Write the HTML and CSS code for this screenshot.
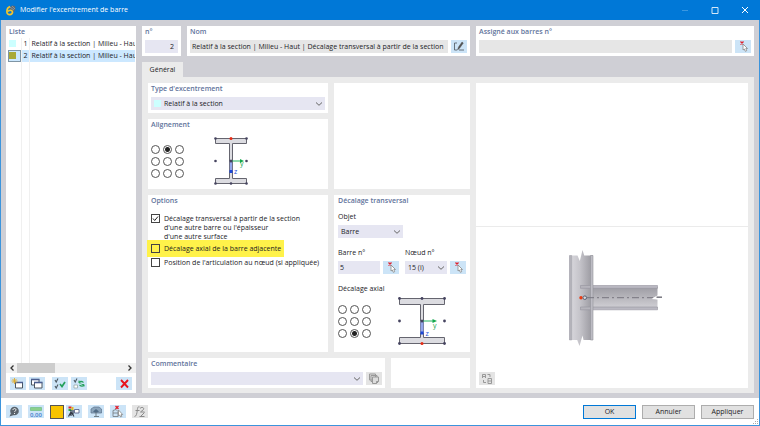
FILE: index.html
```html
<!DOCTYPE html>
<html lang="fr">
<head>
<meta charset="utf-8">
<title>Modifier l'excentrement de barre</title>
<link rel="stylesheet" href="styles.css">
</head>
<body>
<svg class="defs" width="0" height="0" aria-hidden="true">
  <defs>
    <symbol id="chevron" viewBox="0 0 8 6"><path d="M1 1.500L4 4.300L7 1.500" fill="none" stroke="#666" stroke-width="1"/></symbol>
    <symbol id="pick" viewBox="0 0 16 14">
      <path d="M5.500 1.500l3 3M8.500 1.500l-3 3" stroke="#e0202c" stroke-width="1.300"/>
      <path d="M8 4v6l1.300-1 1 2.300 1.400-.6-.9-2.200h1.700z" fill="#fff" stroke="#888" stroke-width=".8"/>
    </symbol>
  </defs>
</svg>
<div class="window">
  <header class="titlebar">
    <svg class="app-icon" width="10" height="11" viewBox="0 0 10 11"><path d="M3 3l3-2.500 3 .5.500 3-2 4z" fill="#5d6873"/><path d="M4 2l4 3M6 1l3 3" stroke="#a5a8a5" stroke-width=".7"/><path d="M4 1.500C1.500 2.500.700 5 1 7.500c.3 2.700 5.300 2.900 5.500-.2C6.600 5 3.500 4.500 2 6.500" fill="none" stroke="#f3c52c" stroke-width="1.700"/></svg>
    <h1>Modifier l'excentrement de barre</h1>
    <button class="caption" aria-label="Réduire"><svg width="8" height="8" viewBox="0 0 8 8"><path d="M1 4.500h6" stroke="#3b97e0"/></svg></button>
    <button class="caption" aria-label="Agrandir"><svg width="8" height="8" viewBox="0 0 8 8"><path d="M1 1.500h6v6H1z" fill="none" stroke="#d5e8f8"/></svg></button>
    <button class="caption" aria-label="Fermer"><svg width="8" height="8" viewBox="0 0 8 8"><path d="M1 1l6 6M7 1L1 7" stroke="#fff"/></svg></button>
  </header>

  <div class="content">
    <aside class="card list">
      <h2>Liste</h2>
      <div class="list-area">
        <table>
          <tr><td class="c-color"><i class="swatch cyan"></i></td><td class="c-num">1</td><td class="c-name">Relatif à la section | Milieu - Haut | Décalage</td></tr>
          <tr class="selected"><td class="c-color"><i class="swatch olive"></i></td><td class="c-num">2</td><td class="c-name">Relatif à la section | Milieu - Haut | Décalage</td></tr>
          <tr class="rest"><td></td><td></td><td></td></tr>
        </table>
      </div>
      <div class="scroll">
        <svg width="10" height="10" viewBox="0 0 10 10"><path d="M6.500 2.500L4 5l2.500 2.500" fill="none" stroke="#333" stroke-width="1.300"/></svg>
        <div class="track"><div class="thumb"></div></div>
        <svg width="10" height="10" viewBox="0 0 10 10"><path d="M3.500 2.500L6 5 3.500 7.500" fill="none" stroke="#333" stroke-width="1.300"/></svg>
      </div>
      <div class="list-tools">
        <button class="icon" aria-label="Nouveau"><svg width="16" height="14" viewBox="0 0 16 14"><path d="M5.500 5.500h7v5.500h-7z" fill="#fff" stroke="#4b5560"/><path d="M5 5.500h8" stroke="#4c5f91" stroke-width="1.500"/><path d="M4.500 1v6M1.500 4h6M2.400 1.900l4.200 4.200M6.600 1.900L2.400 6.100" stroke="#dfad2c" stroke-width=".9"/></svg></button>
        <button class="icon" aria-label="Copier"><svg width="16" height="14" viewBox="0 0 16 14"><path d="M2.500 2.500h7.500V8H2.500z" fill="#fff" stroke="#4b5560"/><path d="M2 2.500h8.500" stroke="#4c5f91" stroke-width="1.600"/><path d="M5.500 5.500h7.500V11H5.500z" fill="#fff" stroke="#4b5560"/><path d="M5 5.500h8.500" stroke="#4c5f91" stroke-width="1.600"/></svg></button>
        <span class="gap"></span>
        <button class="icon" aria-label="Tout sélectionner"><svg width="16" height="14" viewBox="0 0 16 14"><path d="M3 3l1.200 2L6 1.500M3 9l1.200 2L6 7.500" fill="none" stroke="#4e5963" stroke-width="1.100"/><path d="M8 7l2 2.500L13 5" fill="none" stroke="#24a05a" stroke-width="1.700"/></svg></button>
        <button class="icon" aria-label="Inverser la sélection"><svg width="16" height="14" viewBox="0 0 16 14"><path d="M3 3l1.200 2L6 1.500" fill="none" stroke="#4e5963" stroke-width="1.100"/><path d="M3 8h3.500v3H3z" fill="#fff" stroke="#9aa" stroke-width=".8"/><path d="M8 5.500c1-1.200 3-1.200 4.500 0M13 8c-1 1.200-3 1.200-4.500 0" fill="none" stroke="#24a05a" stroke-width="1.200"/><path d="M8 3.500V6h2.500M13 9.500V7.500h-2.500" fill="none" stroke="#24a05a" stroke-width=".9"/></svg></button>
        <span class="push"></span>
        <button class="icon" aria-label="Supprimer"><svg width="16" height="14" viewBox="0 0 16 14"><path d="M5 3l7 7.500M12 3l-7 7.500" stroke="#e8141c" stroke-width="1.900"/></svg></button>
      </div>
    </aside>

    <main>
      <div class="top-row">
        <section class="card number">
          <label class="head" for="no">n°</label>
          <input id="no" class="field right" value="2">
        </section>
        <section class="card name">
          <label class="head" for="nom">Nom</label>
          <div class="line">
            <input id="nom" class="field gray" readonly value="Relatif à la section | Milieu - Haut | Décalage transversal à partir de la section">
            <button class="icon" aria-label="Modifier le nom"><svg width="16" height="14" viewBox="0 0 16 14"><path d="M6 3H3.500v7H6M8 10h5" fill="none" stroke="#59636c" stroke-width=".9"/><path d="M6.500 10l1-3 3.500-5 1.300 1-3.500 5z" fill="#555" stroke="#444" stroke-width=".4"/></svg></button>
          </div>
        </section>
        <section class="card assigned">
          <label class="head" for="assign">Assigné aux barres n°</label>
          <div class="line">
            <input id="assign" class="field gray" readonly>
            <button class="icon" aria-label="Sélectionner les barres"><svg width="16" height="14"><use href="#pick"/></svg></button>
          </div>
        </section>
      </div>

      <nav><button class="tab">Général</button></nav>
      <div class="panel">
        <div class="forms">
          <div class="row">
            <div class="stack">
              <section class="card type">
                <label class="head" for="type">Type d'excentrement</label>
                <div class="pick with-swatch"><i class="swatch cyan"></i><select id="type"><option>Relatif à la section</option></select><svg class="chev" width="8" height="6"><use href="#chevron"/></svg></div>
              </section>
              <section class="card align">
                <h2>Alignement</h2>
                <div class="align-body">
                  <div class="radios">
                    <input type="radio" name="a" aria-label="Gauche haut"><input type="radio" name="a" aria-label="Milieu haut" checked><input type="radio" name="a" aria-label="Droite haut">
                    <input type="radio" name="a" aria-label="Gauche centre"><input type="radio" name="a" aria-label="Centre"><input type="radio" name="a" aria-label="Droite centre">
                    <input type="radio" name="a" aria-label="Gauche bas"><input type="radio" name="a" aria-label="Milieu bas"><input type="radio" name="a" aria-label="Droite bas">
                  </div>
                  <svg width="36" height="50" viewBox="0 0 36 50">
                    <path d="M2.500 2.500h31v5H19.500v35h14v5h-31v-5h14v-35h-14z" fill="#dcdce1" stroke="#65656f"/>
                    <path d="M16.800 25h2.400v10h-2.400z" fill="#93a5ea"/>
                    <path d="M18 25h11" stroke="#25b460"/><path d="M27 23l4 2-4 2z" fill="#14a84e"/>
                    <path d="M16.500 34h3v3h-3z" fill="#1c48d8"/>
                    <g fill="#45435f"><circle cx="2.500" cy="2.500" r="1.300"/><circle cx="33.500" cy="2.500" r="1.300"/><circle cx="2.500" cy="25" r="1.300"/><circle cx="18" cy="25" r="1.500"/><circle cx="33.500" cy="25" r="1.300"/><circle cx="2.500" cy="47.500" r="1.300"/><circle cx="18" cy="47.500" r="1.300"/><circle cx="33.500" cy="47.500" r="1.300"/></g>
                    <circle cx="18" cy="2.500" r="1.500" fill="#e62b14"/>
                    <text x="27" y="30" class="ax-y">y</text><text x="21" y="38" class="ax-z">z</text>
                  </svg>
                </div>
              </section>
            </div>
            <section class="card side"></section>
          </div>

          <div class="row grow">
            <section class="card options">
              <h2>Options</h2>
              <label class="check first"><input type="checkbox" checked><span>Décalage transversal à partir de la section<br>d'une autre barre ou l'épaisseur<br>d'une autre surface</span></label>
              <label class="check marked"><input type="checkbox"><span>Décalage axial de la barre adjacente</span></label>
              <label class="check"><input type="checkbox"><span>Position de l'articulation au nœud (si appliquée)</span></label>
            </section>
            <section class="card side offset">
              <h2>Décalage transversal</h2>
              <label class="lbl" for="objet">Objet</label>
              <div class="pick object"><select id="objet"><option>Barre</option></select><svg class="chev" width="8" height="6"><use href="#chevron"/></svg></div>
              <div class="pair">
                <div class="half"><label class="lbl" for="barre">Barre n°</label>
                  <div class="line"><input id="barre" class="field" value="5"><button class="icon" aria-label="Sélectionner la barre"><svg width="16" height="14"><use href="#pick"/></svg></button></div></div>
                <div class="half"><label class="lbl" for="noeud">Nœud n°</label>
                  <div class="line"><div class="pick"><select id="noeud"><option>15 (i)</option></select><svg class="chev" width="8" height="6"><use href="#chevron"/></svg></div><button class="icon" aria-label="Sélectionner le nœud"><svg width="16" height="14"><use href="#pick"/></svg></button></div></div>
              </div>
              <h3 class="lbl">Décalage axial</h3>
              <div class="axial-body">
                <div class="radios">
                  <input type="radio" name="b" aria-label="Gauche haut"><input type="radio" name="b" aria-label="Milieu haut"><input type="radio" name="b" aria-label="Droite haut">
                  <input type="radio" name="b" aria-label="Gauche centre"><input type="radio" name="b" aria-label="Centre"><input type="radio" name="b" aria-label="Droite centre">
                  <input type="radio" name="b" aria-label="Gauche bas"><input type="radio" name="b" aria-label="Milieu bas" checked><input type="radio" name="b" aria-label="Droite bas">
                </div>
                <svg width="50" height="50" viewBox="0 0 50 50">
                  <path d="M2.500 2.500h45v6h-21v33h21v6h-45v-6h21v-33h-21z" fill="#dcdce1" stroke="#65656f"/>
                  <path d="M23.500 25h3v12h-3z" fill="#93a5ea"/>
                  <path d="M25 25h12" stroke="#25b460"/><path d="M35.500 23l4.500 2-4.500 2z" fill="#14a84e"/>
                  <path d="M23.500 35.500h3v3h-3z" fill="#1c48d8"/>
                  <g fill="#45435f"><circle cx="2.500" cy="2.500" r="1.400"/><circle cx="25" cy="2.500" r="1.400"/><circle cx="47.500" cy="2.500" r="1.400"/><circle cx="2.500" cy="25" r="1.400"/><circle cx="25" cy="25" r="1.500"/><circle cx="47.500" cy="25" r="1.400"/><circle cx="2.500" cy="47.500" r="1.400"/><circle cx="47.500" cy="47.500" r="1.400"/></g>
                  <circle cx="25" cy="47.500" r="1.500" fill="#e62b14"/>
                  <text x="36" y="32" class="ax-y">y</text><text x="28.500" y="40" class="ax-z">z</text>
                </svg>
              </div>
            </section>
          </div>

          <div class="row">
            <section class="card comment">
              <label class="head" for="com">Commentaire</label>
              <div class="line">
                <div class="pick"><select id="com"><option></option></select><svg class="chev" width="8" height="6"><use href="#chevron"/></svg></div>
                <button class="icon off" aria-label="Bibliothèque de commentaires"><svg width="16" height="14" viewBox="0 0 16 14" fill="#ddd" stroke="#999"><path d="M3.500 2h6v6h-6zM5 3.500h6v6H5z"/><path d="M6.500 5h6v4.500l-2 2h-4zM12.500 9.500h-2v2"/></svg></button>
              </div>
            </section>
            <section class="card comment-side"></section>
          </div>
        </div>

        <section class="card preview">
          <div class="preview-top"></div>
          <div class="drawing">
            <svg width="98" height="98" viewBox="566 249 98 98">
              <defs>
                <linearGradient id="col"><stop offset="0" stop-color="#dcdbe0"/><stop offset=".45" stop-color="#c5c4ca"/><stop offset="1" stop-color="#97969d"/></linearGradient>
                <linearGradient id="beam" x2="0" y2="1"><stop offset="0" stop-color="#9d9ca3"/><stop offset="1" stop-color="#d2d1d6"/></linearGradient>
              </defs>
              <path d="M569 255.500h8.500l2.300 5.500 2.700-11 1.700 5.500H593V340h-9.500l-1-4.500-3 10.500-2.300-6H569z" fill="url(#col)"/>
              <path d="M569.500 255.500h2.200V340h-2.200z" fill="#b4b3ba" stroke="#a1a0a8" stroke-width=".5"/>
              <path d="M592 287h65.500v8.500l-4 2.500 4 1.500v9H592z" fill="url(#beam)"/>
              <path d="M592 285.500h65.500v2.800H592zM592 307h65.500v2.800H592z" fill="#b9b8c1" stroke="#95949e" stroke-width=".6"/>
              <path d="M580.500 285.500H592v2.800h-11.500zM580.500 307H592v2.800h-11.500z" fill="#b5b4bb" stroke="#95949e" stroke-width=".6"/>
              <path d="M590.500 255.500h2.500V340h-2.500z" fill="#bdbcc4" stroke="#94939b" stroke-width=".6"/>
              <path d="M587 297.700h66" stroke="#77767f" stroke-dasharray="7 3 2 3"/>
              <path d="M651.500 299l6-3.500 1 1-3 1.500 2.500 1.500z" fill="#fff"/><path d="M656.500 297.200h5.500" stroke="#77767f" stroke-width="1.500"/>
              <circle cx="581" cy="297.700" r="1.700" fill="#ea3a12"/>
              <circle cx="584.800" cy="297.700" r="1.800" fill="#d5d5da" stroke="#5d6474"/>
            </svg>
          </div>
          <div class="preview-tools"><button class="icon off" aria-label="Changer la vue"><svg width="16" height="14" viewBox="0 0 16 14" fill="none" stroke="#999"><path d="M3.500 6V2.500h3V6M3.500 4.500h3M9 6.500h3.500v5H9zM9 9h3M8.500 2.500h2.500V5M7 10.500H4.500V8" /></svg></button></div>
        </section>
      </div>
    </main>
  </div>

  <footer>
    <button class="icon" aria-label="Aide"><svg width="16" height="14" viewBox="0 0 16 14"><circle cx="8.500" cy="6" r="4.300" fill="#59636c"/><path d="M5 8l-1.500 3.500L8 10z" fill="#59636c"/><path d="M7 5c0-2 3.200-1.800 3 0-.1 1-1.500 1-1.500 2M8.500 8v1" fill="none" stroke="#fff" stroke-width=".9"/></svg></button>
    <button class="icon sp" aria-label="Unités"><svg width="16" height="14" viewBox="0 0 16 14"><path d="M2.500 2.500h11v3h-11z" fill="#8bd08c" stroke="#65b978" stroke-width=".6"/><text x="2" y="11.500" class="units">0,00</text></svg></button>
    <button class="color sp" aria-label="Couleur"></button>
    <button class="icon tight" aria-label="Affichage"><svg width="16" height="14" viewBox="0 0 16 14"><path d="M2.500 1.500h3v2h-3z" fill="#e32626"/><path d="M2.500 4h3v2h-3z" fill="#2fab4b"/><path d="M5.500 2h2v3h-2z" fill="#e5ba21"/><path d="M5 5v6M7 5v6M2.500 11.500L5 7l3 4.500" fill="none" stroke="#333b48" stroke-width="1.200"/><path d="M8.500 4.500h4.500V8H8.500z" fill="#fff" stroke="#4d5780" stroke-width=".8"/></svg></button>
    <button class="icon sp" aria-label="Nuage"><svg width="16" height="14" viewBox="0 0 16 14"><path d="M3 8V4l3-2h5l2.500 2v4z" fill="#8ba4bb" stroke="#5b748d" stroke-width=".7"/><path d="M5 6.500L8 4l3 2.500-3 1.500z" fill="#506b86"/><path d="M8 7v4M6 11.500h5" stroke="#6f7e89"/></svg></button>
    <button class="icon sp" aria-label="Sélection"><svg width="16" height="14" viewBox="0 0 16 14"><path d="M5.500 1l3 3M8.500 1l-3 3" stroke="#e0202c" stroke-width="1.300"/><path d="M3 5.500l3-1 2 2v5H3zM3 8h5" fill="none" stroke="#7b8187" stroke-width=".9"/><path d="M8.500 5v6l1.300-1 .9 2 1.200-.6-.8-1.900h1.600z" fill="#fff" stroke="#888" stroke-width=".8"/></svg></button>
    <button class="icon off sp" aria-label="Fonction"><svg width="16" height="14" viewBox="0 0 16 14" fill="none" stroke="#8a8a8a"><path d="M7.500 2C5.500 1 5.500 4 5.200 6S4.500 11.500 2.500 11.500M3.500 5.500h4M8 3.500c1.500-2 4.500-1 3.500 1L8.500 7h4M8.500 11.500l4-4M7.500 11.500h5"/></svg></button>
    <span class="push"></span>
    <button class="action primary">OK</button>
    <button class="action">Annuler</button>
    <button class="action">Appliquer</button>
    <svg class="grip" width="6" height="6" viewBox="0 0 6 6" fill="#aaa"><path d="M4 0h1v1H4zM2 2h1v1H2zM4 2h1v1H4zM0 4h1v1H0zM2 4h1v1H2zM4 4h1v1H4z"/></svg>
  </footer>
</div>
</body>
</html>
```
FILE: styles.css
```css
* { box-sizing: border-box; }
body { margin: 0; font: 500 7px/8px "Open Sans", "Noto Sans", sans-serif; color: #1b1b1f; }
h1, h2, h3 { margin: 0; font: inherit; }
button, input, select { font: inherit; color: inherit; margin: 0; padding: 0; border: 0; border-radius: 0; }
svg { display: block; flex: none; }
.defs { position: absolute; }
.window { display: flex; flex-direction: column; min-height: 100vh; border: 1px solid #3c94dc; border-top: 0; background: #fff; }

.titlebar { display: flex; align-items: center; height: 20px; flex: none; margin: 0 -1px; padding-left: 6px; background: #0078d7; color: #fff; }
.titlebar h1 { flex: 1; margin-left: 4px; }
.caption { display: grid; place-items: center; width: 30px; height: 20px; background: none; }

.content { display: flex; flex: 1; gap: 6px; padding: 6px 5px 5px; background: #cfcfd5; }
.card { background: #fff; min-width: 0; }
.card > h2, .head { display: block; line-height: 10px; font-weight: 600; color: #5f739b; }

.list { display: flex; flex-direction: column; width: 130px; }
.list h2 { padding: 1px 3px; }
.list-area { display: flex; flex: 1; padding: 0 1px 0 2px; }
.list table { width: 100%; table-layout: fixed; border-collapse: collapse; }
.list tr { height: 12px; }
.list .rest { height: auto; }
.list td { padding: 0; overflow: hidden; white-space: nowrap; }
.list td:nth-child(1) { width: 13px; border-right: 1px solid #f0f0f0; padding-bottom: 1px; }
.list td:nth-child(2) { width: 8px; border-right: 1px solid #f0f0f0; text-align: right; padding-right: 1px; }
.list .c-name { padding-left: 2px; }
.selected { background: #cce8ff; }
.selected .c-color { outline: 1px solid #7f95a5; outline-offset: -1px; }
.swatch { display: block; flex: none; width: 7px; height: 7px; margin-left: 1px; }
.cyan { background: #ccffff; }
.olive { background: #a9a937; }
.scroll { display: flex; align-items: center; height: 10px; padding: 0 1px; background: #f0f0f0; }
.track { flex: 1; }
.thumb { width: 35%; height: 10px; background: #cdcdcd; }
.list-tools { display: flex; gap: 3px; padding: 4px 4px 3px; }
.gap { width: 1px; }
.push { flex: 1; }
.icon { display: block; flex: none; width: 16px; height: 13px; overflow: hidden; background: #cce4f7; }
.off { background: #e4e4e4; }

main { display: flex; flex: 1; flex-direction: column; min-width: 0; }
.top-row { display: flex; gap: 6px; }
.top-row .card, .type, .comment { padding: 1px 3px 3px; height: 30px; }
.number { width: 39px; }
.name { width: 283px; }
.assigned { flex: 1; }
.head { margin-bottom: 3px; }
.line { display: flex; gap: 3px; }
.field { display: block; flex: 1; width: 100%; min-width: 0; height: 13px; padding: 0 2px; background: #e6e6f2; }
.right { text-align: right; padding-right: 4px; }
.gray { background: #e6e6e6; }
nav { display: flex; margin-top: 6px; }
.tab { width: 41px; height: 15px; background: #ebebeb; }
.panel { display: flex; flex: 1; gap: 6px; padding: 6px 6px 5px; background: #ebebeb; }
.forms { display: flex; flex-direction: column; gap: 6px; width: 322px; }
.row { display: flex; gap: 6px; }
.grow { flex: 1; }
.stack { display: flex; flex-direction: column; gap: 6px; width: 180px; }
.side { width: 136px; }

.pick { display: flex; align-items: center; flex: 1; min-width: 0; height: 13px; padding: 0 2px 0 3px; background: #e6e6f2; }
.pick select { flex: 1; min-width: 0; height: 13px; appearance: none; background: none; }
.with-swatch .swatch { margin: 0 3px 0 0; }

.align { height: 70px; padding: 1px 3px; }
.align-body { display: flex; align-items: center; gap: 29px; margin-top: 6px; }
.radios { display: grid; grid-template-columns: repeat(3, 9px); gap: 3px; }
.radios input { appearance: none; width: 9px; height: 9px; border: 1px solid #555; border-radius: 50%; background: #fff; }
.radios input:checked { background: radial-gradient(circle, #222 2px, #fff 3px); }
.ax-y { font-size: 7px; fill: #16a34d; }
.ax-z { font-size: 7px; fill: #2450d8; }

.options { width: 180px; padding: 1px 3px; }
.check { display: flex; gap: 4px; width: fit-content; white-space: nowrap; line-height: 9px; }
.check input { appearance: none; flex: none; width: 9px; height: 9px; border: 1px solid #444; }
.check input:checked { background: url("data:image/svg+xml,%3Csvg xmlns='http://www.w3.org/2000/svg' viewBox='0 0 7 7'%3E%3Cpath d='M1 3.500l1.700 2L6 1.500' fill='none' stroke='%23222'/%3E%3C/svg%3E"); }
.first { margin: 8px 0 0; }
.marked { margin: -1px -4px 1px; padding: 4px 3px 4px 4px; background: #fff24a; }
.offset { padding: 1px 4px; }
.lbl { display: block; line-height: 10px; }
.offset > .lbl { margin-top: 6px; }
.object { width: 65px; margin-top: 3px; }
.pair { display: flex; gap: 6px; margin-top: 10px; }
.half { flex: 1; min-width: 0; }
.half .line { margin-top: 3px; }
.offset > h3.lbl { margin-top: 10px; }
.axial-body { display: flex; align-items: center; gap: 26px; margin-top: 2px; }
.comment { width: 237px; }
.comment-side { flex: 1; }

.preview { display: flex; flex: 1; flex-direction: column; }
.preview-top { flex: 1; border-bottom: 1px solid #ebebeb; }
.drawing { display: grid; place-items: center; flex: 1; padding-left: 6px; }
.preview-tools { padding: 3px; }

footer { display: flex; align-items: center; flex: none; height: 27px; padding: 0 5px; position: relative; }
.sp { margin-left: 6px; }
.color { width: 14px; height: 14px; border: 1px solid #555; background: #f8c400; }
.tight { margin-left: 2px; }
.units { font-size: 6px; font-weight: 600; fill: #4780cb; }
.action { width: 53px; height: 14px; border: 1px solid #adadad; background: #e1e1e1; margin-left: 6px; }
.primary { border-color: #0078d7; }
.grip { position: absolute; right: 0; bottom: 0; }
```
